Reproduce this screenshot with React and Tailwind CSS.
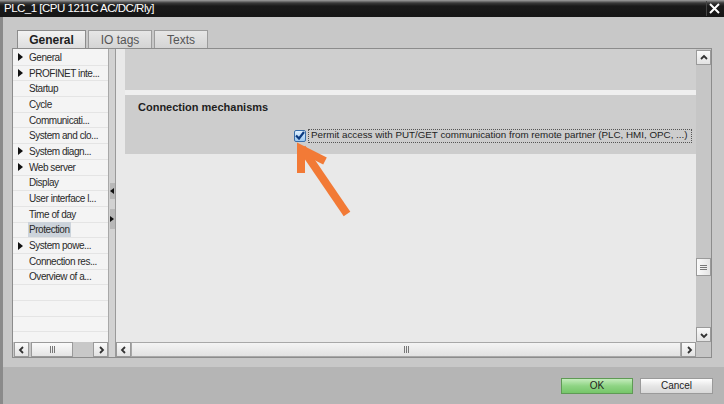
import React from "react";

const navItems = [
  { label: "General", arrow: true },
  { label: "PROFINET inte...", arrow: true },
  { label: "Startup" },
  { label: "Cycle" },
  { label: "Communicati..." },
  { label: "System and clo..." },
  { label: "System diagn...", arrow: true },
  { label: "Web server", arrow: true },
  { label: "Display" },
  { label: "User interface l..." },
  { label: "Time of day" },
  { label: "Protection", active: true },
  { label: "System powe...", arrow: true },
  { label: "Connection res..." },
  { label: "Overview of a..." },
  { label: "" },
  { label: "" },
  { label: "" },
  { label: "" },
];

function ScrollBtn({ children }) {
  return (
    <div className="flex h-[15px] w-[15px] shrink-0 items-center justify-center border border-[#9a9a9a] bg-[linear-gradient(to_bottom,#fafafa,#e2e2e2)] text-[9px] font-bold leading-none text-[#333]">
      {children}
    </div>
  );
}

function Grip({ vertical }) {
  if (vertical) {
    return (
      <div className="flex flex-col gap-[1px]">
        <span className="block h-[1px] w-[7px] bg-[#777]" />
        <span className="block h-[1px] w-[7px] bg-[#777]" />
        <span className="block h-[1px] w-[7px] bg-[#777]" />
      </div>
    );
  }
  return (
    <div className="flex gap-[1px]">
      <span className="block h-[7px] w-[1px] bg-[#777]" />
      <span className="block h-[7px] w-[1px] bg-[#777]" />
      <span className="block h-[7px] w-[1px] bg-[#777]" />
    </div>
  );
}

function Chevron({ dir }) {
  const d = {
    left: "M6 2 L3 5 L6 8",
    right: "M4 2 L7 5 L4 8",
    up: "M2 6 L5 3 L8 6",
    down: "M2 4 L5 7 L8 4",
  }[dir];
  return (
    <svg width="10" height="10" viewBox="0 0 10 10">
      <path d={d} fill="none" stroke="#333" strokeWidth="1.8" />
    </svg>
  );
}

export default function App() {
  return (
    <div className="relative flex h-[404px] w-[724px] flex-col overflow-hidden bg-[#c8c8c8] font-['Liberation_Sans',Arial,sans-serif]">
      {/* title bar */}
      <div className="flex h-[17px] shrink-0 items-center justify-between bg-[linear-gradient(to_bottom,#a0a0a0_0px,#3a3a3a_3px,#1a1a1a_6px,#161616_100%)] pl-[4px] pr-[2px]">
        <span className="text-[11.5px] leading-none tracking-[-0.5px] text-white">
          PLC_1 [CPU 1211C AC/DC/Rly]
        </span>
        <div className="flex h-[15px] w-[16px] items-center justify-center border-l border-[#444]">
          <svg width="11" height="11" viewBox="0 0 11 11">
            <path d="M1 1 L10 10 M10 1 L1 10" stroke="#fff" strokeWidth="2" />
          </svg>
        </div>
      </div>

      {/* body */}
      <div className="flex flex-1 flex-col border-l-[3px] border-[#8a8a8a] pl-[9px] pr-[12px] pt-[13px]">
        {/* tabs */}
        <div className="flex h-[18px] items-end gap-[2px] pl-[5px]">
          <div className="flex h-[18px] w-[69px] items-center justify-center border border-b-0 border-[#8c8c8c] bg-[linear-gradient(to_bottom,#f2f2f2,#dedede)] text-[12px] font-bold text-[#1e1e1e]">
            General
          </div>
          <div className="flex h-[18px] w-[64px] items-center justify-center border border-b-0 border-[#9c9c9c] bg-[linear-gradient(to_bottom,#e6e6e6,#d4d4d4)] text-[12px] text-[#555]">
            IO tags
          </div>
          <div className="flex h-[18px] w-[54px] items-center justify-center border border-b-0 border-[#9c9c9c] bg-[linear-gradient(to_bottom,#e6e6e6,#d4d4d4)] text-[12px] text-[#555]">
            Texts
          </div>
        </div>

        {/* content frame */}
        <div className="flex h-[310px] border border-[#8c8c8c] bg-[#d6d6d6]">
          {/* left nav */}
          <div className="flex w-[96px] flex-col border-r border-[#a8a8a8] bg-[#f4f4f4]">
            <div className="flex-1 overflow-hidden pt-[1px]">
              {navItems.map((it, i) => (
                <div
                  key={i}
                  className="flex h-[15.7px] items-center border-b border-[#e4e4e4] text-[10px] tracking-[-0.45px] text-[#2a2a2a]"
                >
                  <span className="flex w-[15px] shrink-0 justify-center">
                    {it.arrow && (
                      <svg width="5" height="8" viewBox="0 0 5 8">
                        <path d="M0 0 L5 4 L0 8 Z" fill="#111" />
                      </svg>
                    )}
                  </span>
                  <span
                    className={
                      it.active
                        ? "whitespace-nowrap bg-[#ccd3db] px-[1px]"
                        : "whitespace-nowrap px-[1px]"
                    }
                  >
                    {it.label}
                  </span>
                </div>
              ))}
            </div>
            <div className="flex h-[15px] items-center bg-[#c8c8c8] pl-[1px]">
              <ScrollBtn>
                <Chevron dir="left" />
              </ScrollBtn>
              <div className="ml-[2px] flex h-[15px] w-[42px] items-center justify-center border border-[#9a9a9a] bg-[linear-gradient(to_bottom,#fafafa,#e4e4e4)]">
                <Grip />
              </div>
              <div className="flex-1" />
              <ScrollBtn>
                <Chevron dir="right" />
              </ScrollBtn>
            </div>
          </div>

          {/* splitter */}
          <div className="flex w-[7px] flex-col items-center border-r border-[#9a9a9a] bg-[#d2d2d2] pt-[134px]">
            <div className="flex h-[16px] w-[5px] items-center justify-center bg-[#b8b8b8]">
              <svg width="4" height="6" viewBox="0 0 4 6">
                <path d="M4 0 L0 3 L4 6 Z" fill="#111" />
              </svg>
            </div>
            <div className="mt-[10px] flex h-[20px] w-[5px] items-center justify-center bg-[#b8b8b8]">
              <svg width="4" height="6" viewBox="0 0 4 6">
                <path d="M0 0 L4 3 L0 6 Z" fill="#111" />
              </svg>
            </div>
          </div>

          {/* right panel */}
          <div className="flex flex-1 flex-col">
            <div className="flex flex-1">
              <div className="flex flex-1 flex-col bg-[#e9e9e9] pl-[9px]">
                <div className="h-[41px] bg-[#cfcfcf]" />
                <div className="h-[5px] bg-[#efefef]" />
                <div className="flex h-[59px] flex-col bg-[#cdcdcd] pl-[13px]">
                  <div className="pt-[4px] text-[11px] font-bold text-[#1e1e1e]">
                    Connection mechanisms
                  </div>
                  <div className="mt-[13px] flex items-center pl-[156px]">
                    <div className="flex h-[12px] w-[12px] items-center justify-center rounded-[2px] border border-[#3a6ea8] bg-[linear-gradient(to_bottom,#dff0ff,#9cc8ef)]">
                      <svg width="10" height="9" viewBox="0 0 10 9">
                        <path
                          d="M1 4.5 L4 7.5 L9 1"
                          fill="none"
                          stroke="#0b3a80"
                          strokeWidth="2.2"
                        />
                      </svg>
                    </div>
                    <div className="ml-[2px] flex h-[14px] w-[384px] items-center border border-dotted border-[#555] pl-[2px] text-[9.8px] text-[#222]">
                      Permit access with PUT/GET communication from remote partner (PLC, HMI, OPC, ...)
                    </div>
                  </div>
                </div>
              </div>
              {/* vertical scrollbar */}
              <div className="flex w-[15px] flex-col bg-[#c6c6c6] pt-[1px]">
                <ScrollBtn>
                  <Chevron dir="up" />
                </ScrollBtn>
                <div className="mt-[193px] flex h-[18px] w-[15px] items-center justify-center border border-[#9a9a9a] bg-[linear-gradient(to_right,#fafafa,#e4e4e4)]">
                  <Grip vertical />
                </div>
                <div className="flex-1" />
                <ScrollBtn>
                  <Chevron dir="down" />
                </ScrollBtn>
              </div>
            </div>
            <div className="flex h-[15px] bg-[#c6c6c6]">
              <ScrollBtn>
                <Chevron dir="left" />
              </ScrollBtn>
              <div className="flex flex-1 items-center justify-center border border-[#a8a8a8] bg-[linear-gradient(to_bottom,#f4f4f4,#e2e2e2)]">
                <Grip />
              </div>
              <ScrollBtn>
                <Chevron dir="right" />
              </ScrollBtn>
              <div className="w-[15px]" />
            </div>
          </div>
        </div>
        <div className="flex-1" />
      </div>

      {/* footer */}
      <div className="flex h-[37px] shrink-0 items-center justify-end gap-[7px] border-l-[3px] border-[#8a8a8a] bg-[#b5b5b5] pr-[11px]">
        <div className="flex h-[16px] w-[72px] items-center justify-center border border-[#5f9a55] bg-[linear-gradient(to_bottom,#c4ecbc,#8ed483_50%,#76c66a)] text-[10px] text-[#1e1e1e]">
          OK
        </div>
        <div className="flex h-[16px] w-[73px] items-center justify-center border border-[#9a9a9a] bg-[linear-gradient(to_bottom,#ffffff,#e6e6e6_50%,#d8d8d8)] text-[10px] text-[#1e1e1e]">
          Cancel
        </div>
      </div>

      {/* annotation arrow */}
      <svg
        className="pointer-events-none absolute left-0 top-0"
        width="724"
        height="404"
        viewBox="0 0 724 404"
      >
        <path
          d="M301 173 L301 149 L325 161"
          fill="none"
          stroke="#f27a36"
          strokeWidth="8"
          strokeLinejoin="miter"
        />
        <path d="M302 148 L347 214" stroke="#f27a36" strokeWidth="8" />
      </svg>
    </div>
  );
}
